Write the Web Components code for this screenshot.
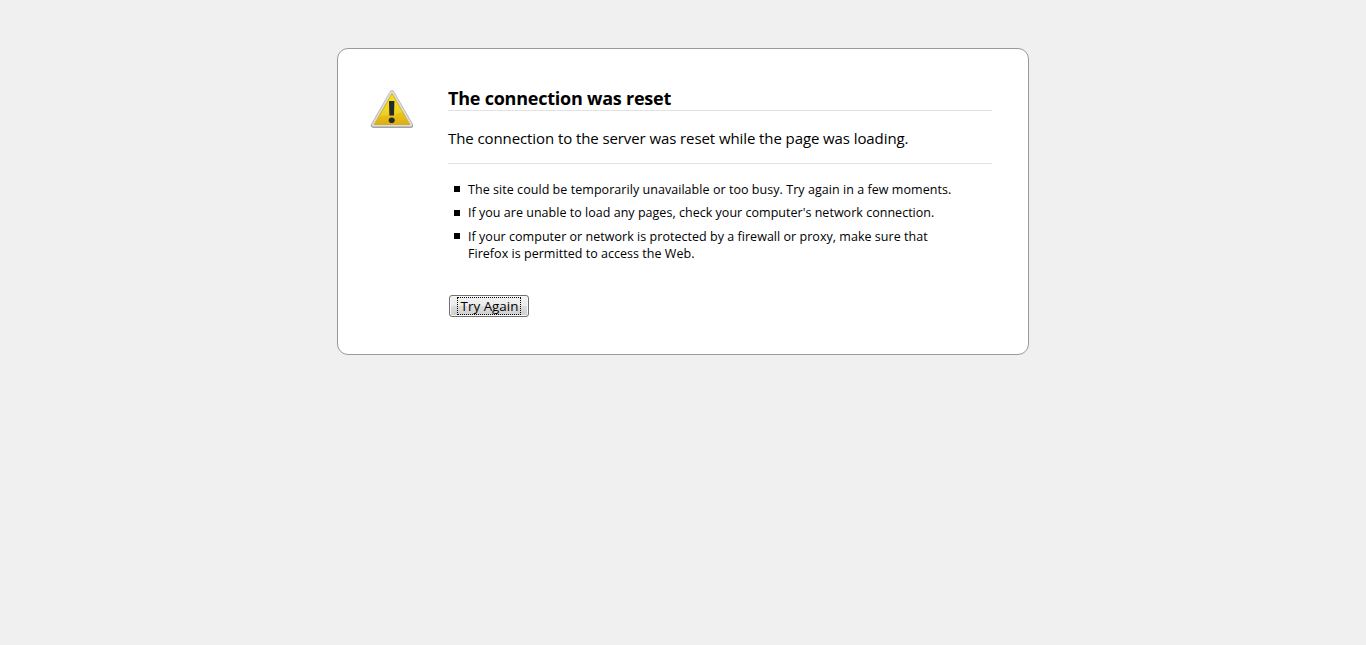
<!DOCTYPE html>
<html lang="en">
<head>
<meta charset="utf-8">
<title>Problem loading page</title>
<style>
html, body { margin: 0; height: 100%; }
body { background: #f0f0f0; color: #000; font-family: "Open Sans", "Noto Sans", sans-serif; overflow: hidden; }
</style>
</head>
<body>
<error-card>
  <warning-icon slot="icon"></warning-icon>
  <error-title>The connection was reset</error-title>
  <error-summary>The connection to the server was reset while the page was loading.</error-summary>
  <hint-list>
    <hint-item style="letter-spacing:.05px">The site could be temporarily unavailable or too busy. Try again in a few moments.</hint-item>
    <hint-item style="letter-spacing:.025px">If you are unable to load any pages, check your computer's network connection.</hint-item>
    <hint-item style="letter-spacing:.035px">If your computer or network is protected by a firewall or proxy, make sure that<br>Firefox is permitted to access the Web.</hint-item>
  </hint-list>
  <retry-button>Try Again</retry-button>
</error-card>
<script>
const define = (name, html) => customElements.define(name, class extends HTMLElement {
  constructor() { super(); this.attachShadow({ mode: "open" }).innerHTML = html; }
});
define("error-card", `<style>
:host { display: grid; grid-template-columns: 44px 544px; column-gap: 34px; box-sizing: border-box; width: 692px; height: 307px; margin: 48px auto 0; padding: 38px 36px 0 32px; border: 1px solid #999; border-radius: 11px; background: #fff; }
</style><slot name="icon"></slot><div><slot></slot></div>`);
define("warning-icon", `<style>:host { display: block; padding-top: 2px; } svg { display: block; }</style>
<svg width="44" height="40" viewBox="0 0 44 40">
<defs><linearGradient id="y" x1="0" y1="0" x2="0" y2="1"><stop offset="0" stop-color="#f0e000"/><stop offset=".55" stop-color="#eccd18"/><stop offset="1" stop-color="#dfac14"/></linearGradient>
<linearGradient id="s" x1="0" y1="0" x2="0" y2="1"><stop offset="0" stop-color="#c4c4c4"/><stop offset="1" stop-color="#a4a4a4"/></linearGradient></defs>
<path d="M22 3.5 3.3 36.4H40.7Z" fill="url(#s)" stroke="url(#s)" stroke-width="5" stroke-linejoin="round"/>
<path d="M22 3.6 3.4 35.9H40.6Z" fill="#ddd" stroke="#ddd" stroke-width="3.2" stroke-linejoin="round"/>
<path d="M22 4.5 4.2 35.5H39.8Z" fill="url(#y)" stroke="#d0ad20" stroke-width=".9" stroke-linejoin="round"/>
<path d="M22 6 10 27Q26 26 32.5 22.5Z" fill="#fff45a" opacity=".22"/>
<path d="M19 12h5.4l-.4 14.5h-4.6Z" fill="#252a2c"/><ellipse cx="21.7" cy="31.2" rx="3" ry="2.8" fill="#252a2c"/>
</svg>`);
define("error-title", `<style>:host { display: block; height: 23px; line-height: 23px; border-bottom: 1px solid #e2e2e2; font-size: 18px; font-weight: 700; letter-spacing: -.23px; white-space: nowrap; }</style><slot></slot>`);
define("error-summary", `<style>:host { display: block; height: 37px; padding-top: 15px; line-height: 24px; border-bottom: 1px solid #e2e2e2; font-size: 15px; letter-spacing: -.09px; white-space: nowrap; }</style><slot></slot>`);
define("hint-list", `<style>:host { display: flex; flex-direction: column; gap: 6.5px; padding: 17px 0 0 6px; }</style><slot></slot>`);
define("hint-item", `<style>:host { display: flex; gap: 8px; font-size: 12.5px; line-height: 17px; white-space: nowrap; } i { width: 6px; height: 6px; margin-top: 5px; background: #000; } div { margin: -.3px 0 .3px; }</style><i></i><div><slot></slot></div>`);
define("retry-button", `<style>:host { display: block; padding: 33px 0 0 1px; }
button { display: block; box-sizing: border-box; width: 80px; height: 22px; margin: 0; padding: 1px 7px; border: 1px solid #707070; border-radius: 3px; background: linear-gradient(#f2f2f2, #ebebeb 50%, #ddd 50%, #cfcfcf); box-shadow: inset 0 0 0 1px #f7f7f7; font: 13.4px "Open Sans", sans-serif; color: #000; white-space: nowrap; }
span { display: block; box-sizing: border-box; height: 18px; line-height: 17px; border: 1px dotted #000; text-indent: 1px; }</style><button><span><slot></slot></span></button>`);
</script>
</body>
</html>
